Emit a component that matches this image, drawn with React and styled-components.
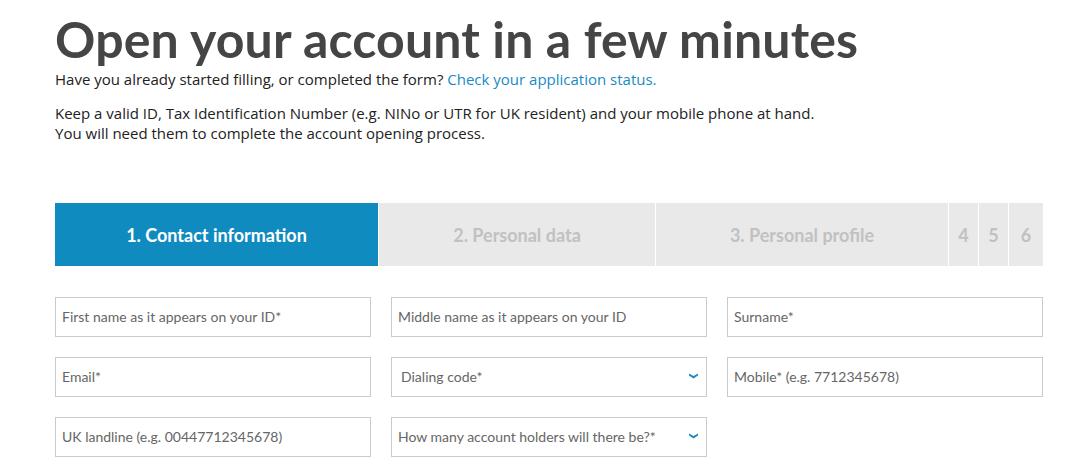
import React from "react";
import styled, { createGlobalStyle } from "styled-components";

const GlobalStyle = createGlobalStyle`
  body {
    margin: 0;
    background: #fff;
    font-family: Lato, "Open Sans", Arial, sans-serif;
    color: #333;
  }
`;

const Page = styled.div`
  width: 988px;
  padding: 9px 0 0 55px;
`;

const Title = styled.h1`
  margin: 0;
  font-size: 50px;
  font-weight: 700;
  color: #454545;
  line-height: 60px;
  letter-spacing: 0.15px;
`;

const Lead = styled.p`
  margin: 0;
  font-family: "Open Sans", Lato, Arial, sans-serif;
  font-size: 15px;
  font-weight: 500;
  line-height: 20px;
  color: #222;
  & + & {
    margin-top: 14px;
  }
`;

const Link = styled.a`
  color: #1a8ac4;
  text-decoration: none;
`;

const Steps = styled.div`
  display: flex;
  gap: 1px;
  margin-top: 60px;
  height: 63px;
`;

const Step = styled.div`
  width: ${(p) => p.w}px;
  flex: none;
  display: flex;
  align-items: center;
  justify-content: center;
  font-size: 18px;
  font-weight: 700;
  background: ${(p) => (p.active ? "#0f8bc0" : "#e9e9e9")};
  color: ${(p) => (p.active ? "#fff" : "#c1c1c1")};
`;

const Grid = styled.div`
  display: grid;
  grid-template-columns: repeat(3, 316px);
  column-gap: 20px;
  row-gap: 20px;
  margin-top: 31px;
`;

const Field = styled.div`
  height: 40px;
  box-sizing: border-box;
  border: 1px solid #cbcbcb;
  display: flex;
  align-items: center;
  justify-content: space-between;
  padding: 0 ${(p) => (p.select ? "8px" : "6px")} 2px ${(p) => (p.indent ? "9px" : "6px")};
  font-size: 14px;
  color: #666;
`;

const Chevron = () => (
  <svg width="9" height="6" viewBox="0 0 9 6">
    <path d="M0 0.5 L4.5 3 L9 0.5 L9 2.5 L4.5 5.5 L0 2.5 Z" fill="#1a8ac4" />
  </svg>
);

const steps = [
  { label: "1. Contact information", w: 323, active: true },
  { label: "2. Personal data", w: 276 },
  { label: "3. Personal profile", w: 292 },
  { label: "4", w: 29 },
  { label: "5", w: 29 },
  { label: "6", w: 34 },
];

const fields = [
  { label: "First name as it appears on your ID*" },
  { label: "Middle name as it appears on your ID" },
  { label: "Surname*" },
  { label: "Email*" },
  { label: "Dialing code*", select: true, indent: true },
  { label: "Mobile* (e.g. 7712345678)" },
  { label: "UK landline (e.g. 00447712345678)" },
  { label: "How many account holders will there be?*", select: true },
];

export default function App() {
  return (
    <>
      <GlobalStyle />
      <Page>
        <Title>Open your account in a few minutes</Title>
        <Lead>
          Have you already started filling, or completed the form?{" "}
          <Link href="#">Check your application status.</Link>
        </Lead>
        <Lead>
          Keep a valid ID, Tax Identification Number (e.g. NINo or UTR for UK resident) and your mobile phone at hand.
          <br />
          You will need them to complete the account opening process.
        </Lead>
        <Steps>
          {steps.map((s) => (
            <Step key={s.label} w={s.w} active={s.active}>
              {s.label}
            </Step>
          ))}
        </Steps>
        <Grid>
          {fields.map((f) => (
            <Field key={f.label} select={f.select} indent={f.indent}>
              <span>{f.label}</span>
              {f.select && <Chevron />}
            </Field>
          ))}
        </Grid>
      </Page>
    </>
  );
}
